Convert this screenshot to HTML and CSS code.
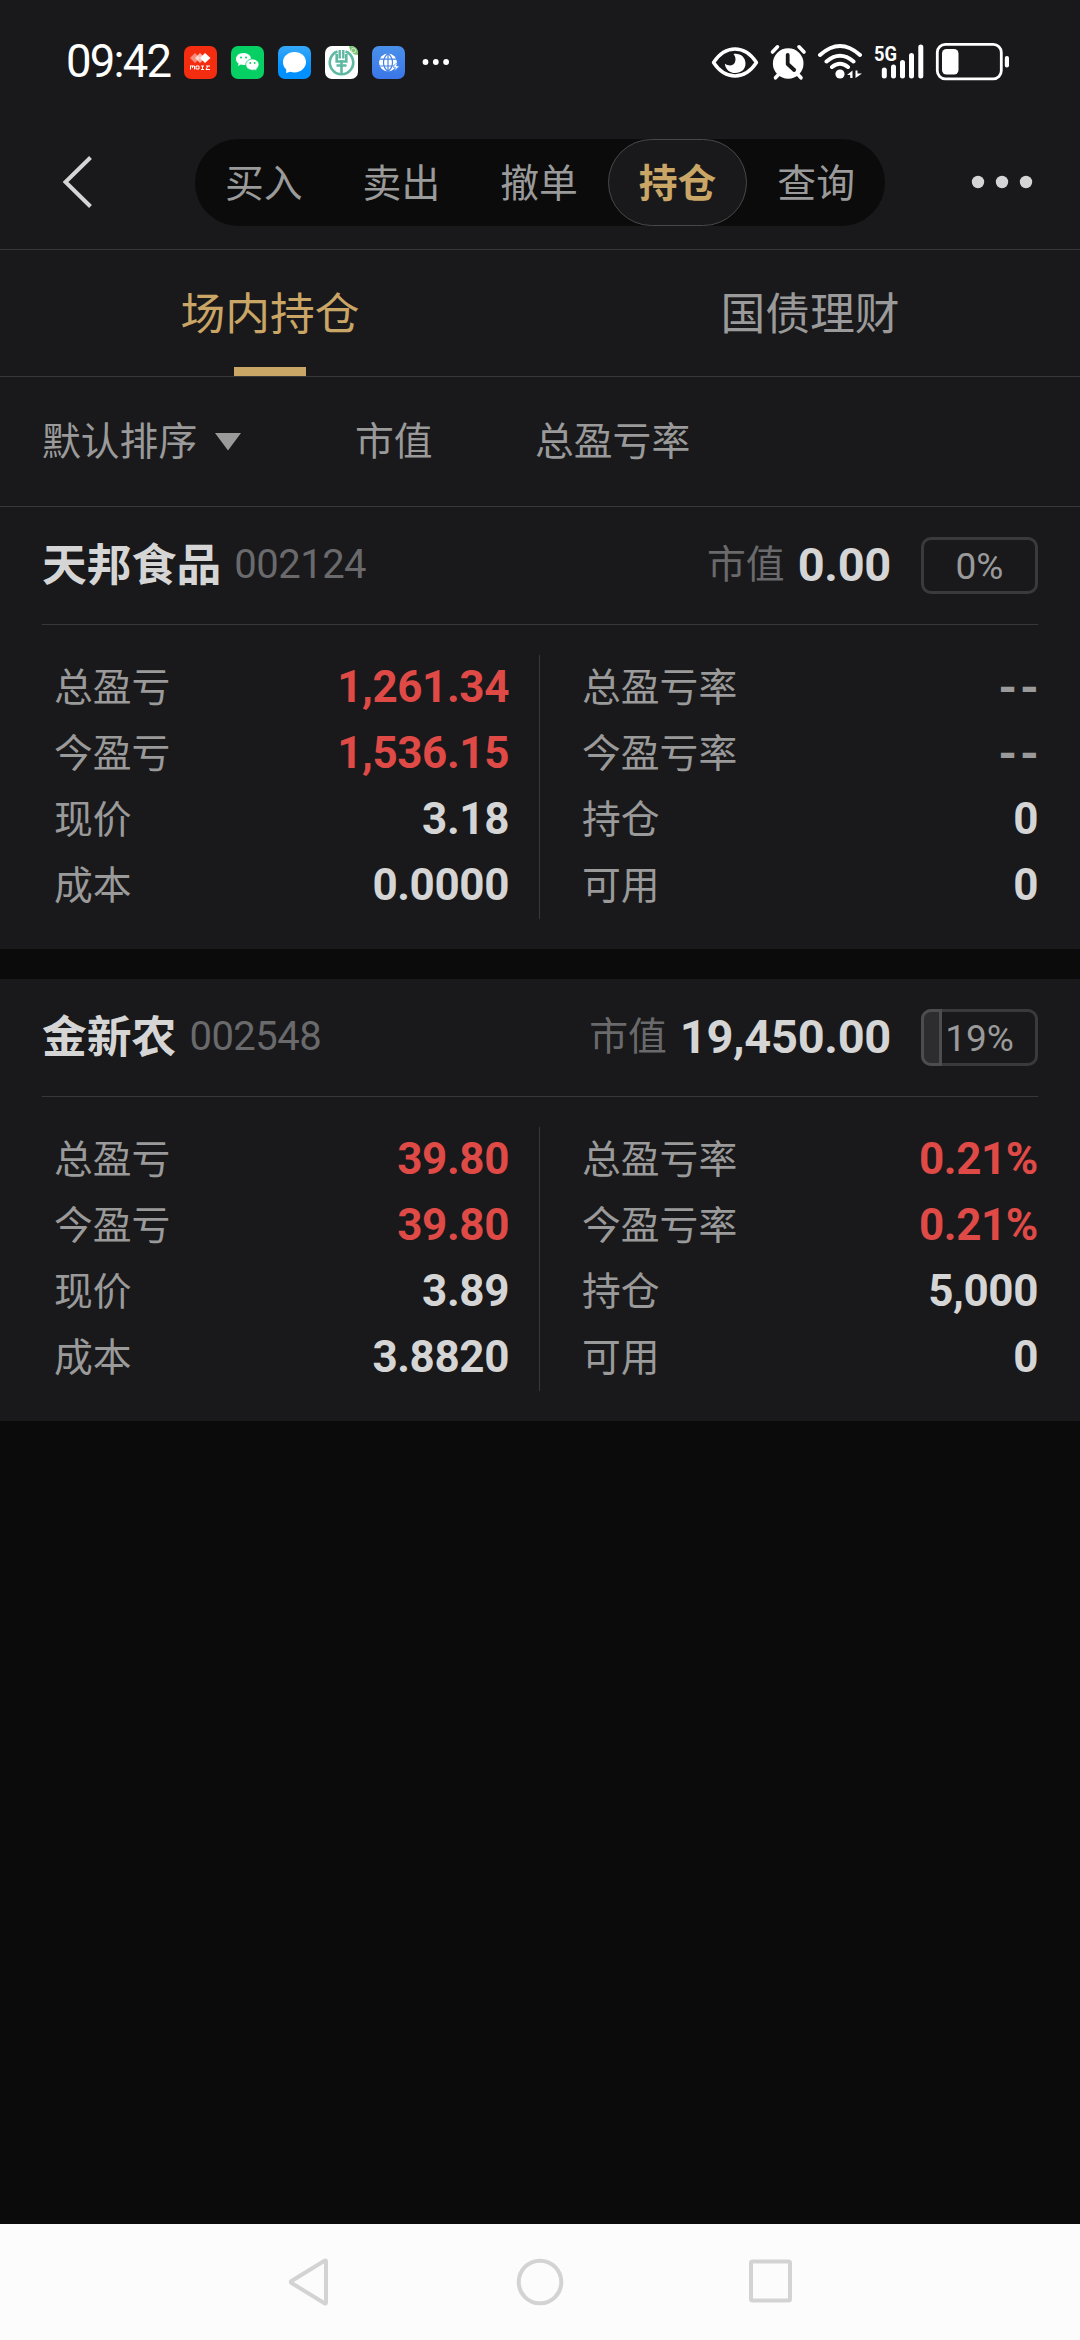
FILE: index.html
```html
<!DOCTYPE html>
<html lang="zh-CN">
<head>
    <meta charset="UTF-8">
    <meta name="viewport" content="width=device-width, initial-scale=1.0">
    <title>持仓</title>
    <link rel="stylesheet" href="styles.css">
</head>
<body>

    <div class="status-bar">
        <span class="time">09:42</span>
        <div class="apps">
            <svg width="33" height="33" viewBox="0 0 33 33">
                <rect width="33" height="33" rx="7" fill="#f52d10"/>
                <path d="M6 12l5-5 5 5-5 5z" fill="#fff" opacity=".45"/>
                <path d="M11 12l5-5 5 5-5 5z" fill="#fff" opacity=".65"/>
                <path d="M16 12l5-5 5.500 5-5.500 5z" fill="#fff"/>
                <path d="M6.500 19.500v4M6.500 20h4v3.500M8.500 20v2M12 20h3v3h-3zM17 20h3M18.500 20v3.500M17 23.500h3M22 20h4M24 20l-2 3.500h4" fill="none" stroke="#fff" stroke-width="1"/>
            </svg>
            <svg width="33" height="33" viewBox="0 0 33 33">
                <rect width="33" height="33" rx="7" fill="#06cf63"/>
                <path d="M12.500 7C8 7 5 9.800 5 13c0 2 1 3.500 2.600 4.600L7 20l2.800-1.400c.9.300 1.800.4 2.700.4C17 19 20 16.500 20 13s-3.200-6-7.500-6z" fill="#fff"/>
                <path d="M21.500 13c-3.900 0-6.700 2.500-6.700 5.600 0 3.200 3 5.600 6.700 5.600.8 0 1.600-.1 2.300-.3L26 25l-.5-2c1.500-1 2.500-2.600 2.500-4.400 0-3.100-2.800-5.600-6.500-5.600z" fill="#fff" stroke="#06cf63" stroke-width=".8"/>
                <circle cx="10" cy="11.500" r="1" fill="#06cf63"/>
                <circle cx="15" cy="11.500" r="1" fill="#06cf63"/>
                <circle cx="19.300" cy="17" r=".9" fill="#06cf63"/>
                <circle cx="23.700" cy="17" r=".9" fill="#06cf63"/>
            </svg>
            <svg width="33" height="33" viewBox="0 0 33 33">
                <defs>
                    <linearGradient id="msg" x1="0" y1="0" x2="0" y2="1">
                        <stop offset="0" stop-color="#35a8f8"/>
                        <stop offset=".7" stop-color="#0090ff"/>
                    </linearGradient>
                </defs>
                <rect width="33" height="33" rx="7" fill="url(#msg)"/>
                <path d="M16.500 6C10 6 5 10.400 5 16c0 3.200 1.200 5.600 3.200 7.300V27l4-1.200c1.300.4 2.700.6 4.300.6C23 26.400 28 21.800 28 16S23 6 16.500 6z" fill="#fff"/>
            </svg>
            <svg width="33" height="33" viewBox="0 0 33 33">
                <rect width="33" height="33" rx="7" fill="#fff"/>
                <path d="M24 0h2a7 7 0 0 1 7 7v2c-5 0-8-3-9-9z" fill="#7cc576"/>
                <circle cx="28.500" cy="4.500" r="2.200" fill="none" stroke="#d5f0c8" stroke-width="1"/>
                <path d="M12.500 5.500a11.700 11.700 0 1 0 8 0" fill="none" stroke="#5fb8a2" stroke-width="2.600"/>
                <path d="M14.700 4v8.500M18.300 4v8.500" fill="none" stroke="#5fb8a2" stroke-width="2.400"/>
                <path d="M11.700 8v7.500h9.600V8M11.500 19.500h10M16.500 14v14.500" fill="none" stroke="#5fb8a2" stroke-width="2.600"/>
            </svg>
            <svg width="33" height="33" viewBox="0 0 33 33">
                <defs>
                    <linearGradient id="web" x1="0" y1="0" x2="0" y2="1">
                        <stop offset="0" stop-color="#4a90ea"/>
                        <stop offset="1" stop-color="#3a76e8"/>
                    </linearGradient>
                </defs>
                <rect width="33" height="33" rx="7" fill="url(#web)"/>
                <circle cx="16" cy="16.500" r="9" fill="#fff"/>
                <path d="M7 13.200h18M7 20h18M16 7.500v18M16 7.500c-6 5-6 13 0 18M16 7.500c6 5 6 13 0 18" fill="none" stroke="#4382e8" stroke-width="1.200"/>
                <path d="M22.500 18.500l3-1.500-1 3h3l-5 5 1-3.500h-2z" fill="#fff" stroke="#3f7de8" stroke-width=".6"/>
            </svg>
        </div>
        <svg class="more-apps" width="28" height="8" viewBox="0 0 28 8" fill="#fff">
            <circle cx="3.500" cy="4" r="2.900"/>
            <circle cx="13.800" cy="4" r="2.900"/>
            <circle cx="24.100" cy="4" r="2.900"/>
        </svg>
        <svg class="sys-icons" width="300" height="40" viewBox="0 0 300 40">
            <!-- eye comfort -->
            <path d="M3.500 21.500Q12.500 8 25 8t21.500 13.500Q37.500 35 25 35T3.500 21.500z" fill="none" stroke="#fff" stroke-width="3.400" stroke-linejoin="round"/>
            <path d="M23.500 13c7-1 12 3.500 12 9.500 0 6-4.500 9.500-10.200 9.500-6 0-9.800-3.800-10.500-9.300 4 2.500 8 2.300 9.800-.7 1.800-3.200.8-6.500-1.100-9z" fill="#fff"/>
            <!-- alarm -->
            <circle cx="78.200" cy="22.500" r="15.300" fill="#fff"/>
            <path d="M62.500 11l5-5.200M94 11l-5-5.200M68.500 33.500l-3 3.300M88 33.500l3 3.300" stroke="#fff" stroke-width="3.600" stroke-linecap="round"/>
            <path d="M77.700 14v9l6.500 6" fill="none" stroke="#19191b" stroke-width="3.800" stroke-linecap="round" stroke-linejoin="round"/>
            <!-- wifi -->
            <path d="M110 14q20-18 40 0M116.500 20.500q13.500-11.500 27 0M122 26q8-6.500 16 0" fill="none" stroke="#fff" stroke-width="4" stroke-linecap="round"/>
            <circle cx="130" cy="33" r="4.600" fill="#fff"/>
            <path d="M142.500 29.500v7.500h-2.300v-3H137zM145.500 37v-7.500h2v3h4.500z" fill="#fff"/>
            <!-- signal -->
            <text class="net" x="164" y="20" textLength="23" lengthAdjust="spacingAndGlyphs">5G</text>
            <path d="M174.300 29v6M183.500 26v9M192.500 21.500v13.500M201.500 14.500v20.500M210.800 6v29" stroke="#fff" stroke-width="5" stroke-linecap="round"/>
            <!-- battery -->
            <rect x="227.300" y="3.300" width="64" height="34.500" rx="8" fill="none" stroke="#fff" stroke-width="2.800"/>
            <rect x="232" y="8" width="16.500" height="25.500" rx="4.500" fill="#fff"/>
            <rect x="294.800" y="15" width="4.200" height="11.500" rx="2" fill="#fff"/>
        </svg>
    </div>

    <div class="header">
        <svg class="back" width="32" height="52" viewBox="0 0 32 52">
            <path d="M28.500 1.500L3.500 26l25 24.500" fill="none" stroke="#d5d5d5" stroke-width="4"/>
        </svg>
        <div class="segments">
            <span class="segment">买入</span>
            <span class="segment">卖出</span>
            <span class="segment">撤单</span>
            <span class="segment active">持仓</span>
            <span class="segment">查询</span>
        </div>
        <svg class="menu" width="62" height="14" viewBox="0 0 62 14" fill="#d5d5d5">
            <circle cx="7" cy="7" r="6.200"/>
            <circle cx="31" cy="7" r="6.200"/>
            <circle cx="55" cy="7" r="6.200"/>
        </svg>
    </div>

    <div class="tabs">
        <div class="tab active">场内持仓</div>
        <div class="tab">国债理财</div>
    </div>

    <div class="sort-bar">
        <span class="sort-default">默认排序
            <svg width="26" height="18" viewBox="0 0 26 18"><path d="M0 0h26L13 17.500z" fill="#9a9a9a"/></svg>
        </span>
        <span class="sort-value">市值</span>
        <span>总盈亏率</span>
    </div>

    <div class="card">
        <div class="card-head">
            <span class="name">天邦食品</span>
            <span class="code">002124</span>
            <span class="mv-label">市值</span>
            <span class="mv">0.00</span>
            <span class="percent">0%</span>
        </div>
        <div class="card-body">
            <div class="col left">
                <div class="row"><span>总盈亏</span><b class="red">1,261.34</b></div>
                <div class="row"><span>今盈亏</span><b class="red">1,536.15</b></div>
                <div class="row"><span>现价</span><b>3.18</b></div>
                <div class="row"><span>成本</span><b>0.0000</b></div>
            </div>
            <div class="col right">
                <div class="row"><span>总盈亏率</span><b class="none">--</b></div>
                <div class="row"><span>今盈亏率</span><b class="none">--</b></div>
                <div class="row"><span>持仓</span><b>0</b></div>
                <div class="row"><span>可用</span><b>0</b></div>
            </div>
        </div>
    </div>

    <div class="card">
        <div class="card-head">
            <span class="name">金新农</span>
            <span class="code">002548</span>
            <span class="mv-label">市值</span>
            <span class="mv">19,450.00</span>
            <span class="percent"><i class="fill" style="width: 19%"></i>19%</span>
        </div>
        <div class="card-body">
            <div class="col left">
                <div class="row"><span>总盈亏</span><b class="red">39.80</b></div>
                <div class="row"><span>今盈亏</span><b class="red">39.80</b></div>
                <div class="row"><span>现价</span><b>3.89</b></div>
                <div class="row"><span>成本</span><b>3.8820</b></div>
            </div>
            <div class="col right">
                <div class="row"><span>总盈亏率</span><b class="red">0.21%</b></div>
                <div class="row"><span>今盈亏率</span><b class="red">0.21%</b></div>
                <div class="row"><span>持仓</span><b>5,000</b></div>
                <div class="row"><span>可用</span><b>0</b></div>
            </div>
        </div>
    </div>

    <div class="nav-bar">
        <svg width="48" height="54" viewBox="0 0 48 54"><path d="M41 6.500v41q0 1.500-1.500.7L6.500 28q-1.500-1 0-2L39.500 5.800Q41 5 41 6.500z"/></svg>
        <svg width="48" height="54" viewBox="0 0 48 54"><circle cx="24" cy="27" r="21.300"/></svg>
        <svg width="48" height="54" viewBox="0 0 48 54"><rect x="4" y="6.500" width="39" height="39" rx="1.500"/></svg>
    </div>

</body>
</html>
```

FILE: styles.css
```css
* {
    box-sizing: border-box;
}
body {
    margin: 0;
    width: 1080px;
    height: 2340px;
    display: flex;
    flex-direction: column;
    background-color: #0b0b0b;
    color: #9a9a9a;
    font-family: Roboto, "Noto Sans CJK SC", sans-serif;
    font-size: 38.8px;
    overflow: hidden;
}
svg {
    display: block;
    flex: none;
}

/* status bar */
.status-bar {
    height: 124px;
    padding: 0 70px 0 66px;
    display: flex;
    align-items: center;
    background-color: #19191b;
}
.time {
    width: 118px;
    color: #fff;
    font-size: 45.5px;
    line-height: 60px;
    letter-spacing: -1.8px;
    white-space: nowrap;
}
.apps {
    display: flex;
    gap: 14px;
}
.more-apps {
    margin-left: 17px;
}
.sys-icons {
    margin-left: auto;
    margin-bottom: 3px;
}
.net {
    fill: #fff;
    font-size: 21px;
    font-weight: 700;
}

/* header */
.header {
    height: 126px;
    padding: 0 47px 0 62px;
    display: flex;
    align-items: center;
    background-color: #19191b;
    border-bottom: 1px solid #38383a;
}
.back, .menu {
    margin-bottom: 9px;
}
.segments {
    display: flex;
    width: 690px;
    height: 87px;
    margin: 0 auto 8px 101px;
    background-color: #0b0b0b;
    border-radius: 44px;
}
.segment {
    flex: 1;
    line-height: 89px;
    text-align: center;
}
.segment.active {
    line-height: 87px;
    color: #c9a566;
    font-weight: 700;
    background-color: #19191b;
    border: 1px solid #48484a;
    border-radius: 44px;
}

/* tabs */
.tabs {
    height: 127px;
    display: flex;
    background-color: #19191b;
    border-bottom: 1px solid #38383a;
}
.tab {
    flex: 1;
    font-size: 44.8px;
    line-height: 129px;
    text-align: center;
}
.tab.active {
    height: 126px;
    color: #c9a566;
    background: linear-gradient(#c9a566, #c9a566) center bottom / 72px 9px no-repeat;
}

/* sort bar */
.sort-bar {
    height: 130px;
    padding-left: 42px;
    display: flex;
    align-items: center;
    line-height: 56px;
    background-color: #19191b;
    border-bottom: 1px solid #38383a;
}
.sort-default {
    width: 313px;
    display: flex;
    align-items: center;
    gap: 18px;
}
.sort-value {
    width: 180px;
}

/* position cards */
.card {
    height: 442px;
    padding: 0 42px;
    background-color: #19191b;
}
.card + .card {
    margin-top: 30px;
}
.card-head {
    height: 118px;
    display: flex;
    align-items: center;
    border-bottom: 1px solid #38383a;
    line-height: 60px;
}
.name {
    color: #d5d5d5;
    font-size: 44.8px;
    font-weight: 700;
}
.code {
    margin: 0 auto 2px 13px;
    color: #6a6a6c;
    font-size: 40px;
    letter-spacing: -0.5px;
}
.mv-label {
    margin-bottom: 2px;
    color: #6a6a6c;
}
.mv {
    margin: 0 30px 2px 13px;
    color: #d5d5d5;
    font-size: 47px;
    font-weight: 700;
    letter-spacing: -0.3px;
}
.percent {
    position: relative;
    width: 117px;
    height: 57px;
    border: 3px solid #3a3a3c;
    border-radius: 10px;
    font-size: 37px;
    line-height: 54px;
    text-align: center;
}
.fill {
    position: absolute;
    top: -3px;
    bottom: -3px;
    left: -3px;
    background-color: #2d2d2f;
    border: 3px solid #4d4d4f;
    border-radius: 10px 0 0 10px;
}
.card-body {
    padding: 30px 0;
    display: flex;
}
.col {
    width: 498px;
}
.left {
    padding: 0 30px 0 12px;
    border-right: 1px solid #38383a;
}
.right {
    padding-left: 42px;
}
.row {
    height: 66px;
    display: flex;
    justify-content: space-between;
    line-height: 65px;
}
.row b {
    color: #d5d5d5;
    font-size: 44px;
    letter-spacing: -0.4px;
}
.row .red {
    color: #df4a46;
}
.row .none {
    margin-right: -4px;
    color: #9a9a9a;
    font-size: 48px;
    letter-spacing: 3px;
}

/* system navigation */
.nav-bar {
    height: 116px;
    margin-top: auto;
    padding: 0 285px;
    display: flex;
    align-items: center;
    justify-content: space-between;
    background-color: #fcfcfc;
}
.nav-bar svg {
    fill: none;
    stroke: #d3d3d3;
    stroke-width: 4;
}
```
